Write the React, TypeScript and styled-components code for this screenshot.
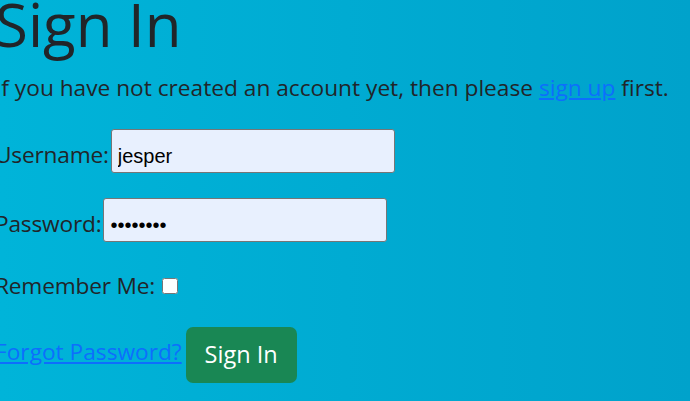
import styled, { createGlobalStyle } from 'styled-components';

const GlobalStyle = createGlobalStyle`
  html, body {
    margin: 0;
    padding: 0;
    height: 100%;
  }
  body {
    background: linear-gradient(90deg, #00b4d9 0%, #00a2cb 100%);
    color: #212529;
    font-family: 'Open Sans', 'Noto Sans', sans-serif;
    overflow: hidden;
  }
`;

/** page shell, shifted a bit left like the screenshot */
const Page = styled.main`
  margin-left: -5px;
  font-size: 22.7px;
`;

const Title = styled.h1`
  margin: -8px 0 0;
  font-size: 60px;
  font-weight: 400;
  line-height: 64px;
`;

const Intro = styled.p`
  margin: 18px 0 0;
  line-height: 28px;
  white-space: nowrap;
`;

const Link = styled.a`
  color: #0d6efd;
  text-decoration: underline;
`;

const Form = styled.form`
  display: flex;
  flex-direction: column;
`;

const Row = styled.div<{ $top: number; $align?: string; $gap?: number }>`
  display: flex;
  align-items: ${p => p.$align ?? 'baseline'};
  gap: ${p => p.$gap ?? 2}px;
  margin-top: ${p => p.$top}px;
  line-height: 28px;
`;

const Label = styled.label`
  white-space: nowrap;
  letter-spacing: -0.2px;
`;

const TextInput = styled.input`
  box-sizing: border-box;
  width: 284px;
  height: 44px;
  padding: 13px 6px 3px;
  border: 1px solid #767676;
  border-radius: 3px;
  background: #e8f0fe;
  color: #000;
  font-family: 'Liberation Sans', Arial, sans-serif;
  font-size: 20px;
  outline: none;
`;

const Check = styled.input`
  width: 16px;
  height: 16px;
  margin: 0;
`;

const ForgotLink = styled(Link)`
  margin-bottom: 17px;
  white-space: nowrap;
`;

const Button = styled.button`
  box-sizing: border-box;
  width: 111px;
  height: 56px;
  border: none;
  border-radius: 7px;
  background: #198754;
  color: #fff;
  font-family: 'Open Sans', 'Noto Sans', sans-serif;
  font-size: 23.5px;
  line-height: 1;
  padding: 0;
  cursor: pointer;
`;

export default function App() {
  return (
    <>
      <GlobalStyle />
      <Page>
        <Title>Sign In</Title>
        <Intro>
          If you have not created an account yet, then please <Link href="#">sign up</Link> first.
        </Intro>
        <Form onSubmit={e => e.preventDefault()}>
          <Row $top={27}>
            <Label htmlFor="username">Username:</Label>
            <TextInput id="username" type="text" defaultValue="jesper" />
          </Row>
          <Row $top={25}>
            <Label htmlFor="password">Password:</Label>
            <TextInput id="password" type="password" defaultValue="secret12" />
          </Row>
          <Row $top={30} $gap={7}>
            <Label htmlFor="remember">Remember Me:</Label>
            <Check id="remember" type="checkbox" />
          </Row>
          <Row $top={27} $align="flex-end" $gap={4}>
            <ForgotLink href="#">Forgot Password?</ForgotLink>
            <Button type="submit">Sign In</Button>
          </Row>
        </Form>
      </Page>
    </>
  );
}
